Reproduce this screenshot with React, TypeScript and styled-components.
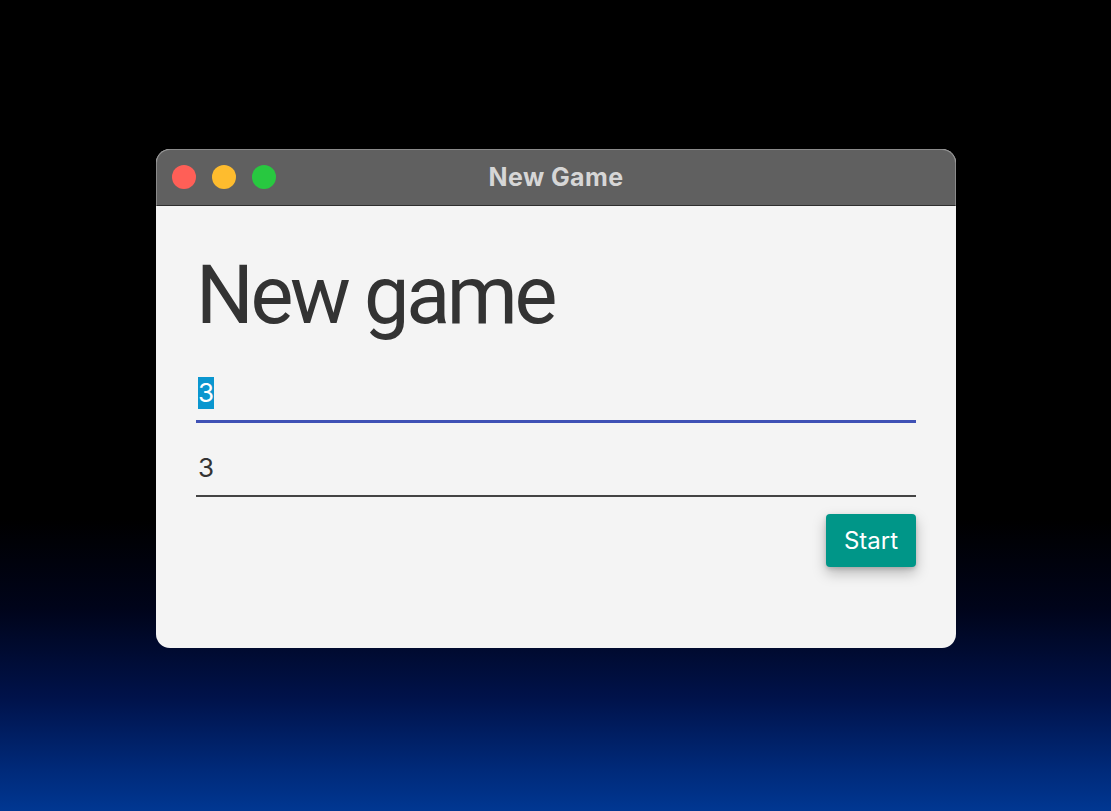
import styled, { createGlobalStyle } from "styled-components";

const GlobalStyle = createGlobalStyle`
  html, body {
    margin: 0;
    padding: 0;
  }

  body {
    min-height: 811px;
    background: linear-gradient(
      to bottom,
      #000 0%,
      #000 64%,
      #00041a 75%,
      #00124a 86%,
      #002a7a 95%,
      #003792 100%
    );
    font-family: Inter, "Noto Sans", sans-serif;
  }
`;

const Desktop = styled.div`
  display: flex;
  padding: 149px 0 0 156px;
`;

const Window = styled.div`
  width: 800px;
  height: 499px;
  display: flex;
  flex-direction: column;
  border-radius: 14px;
  overflow: hidden;
  box-sizing: border-box;
  background: #f4f4f4;
`;

const TitleBar = styled.div`
  position: relative;
  height: 57px;
  flex-shrink: 0;
  display: flex;
  align-items: center;
  justify-content: center;
  background: #606060;
  border: 1px solid #8a8a8a;
  border-bottom: 1px solid #2e2e2e;
  border-radius: 14px 14px 0 0;
  box-sizing: border-box;
`;

const Lights = styled.div`
  position: absolute;
  left: 15px;
  top: 15px;
  display: flex;
  gap: 16px;
`;

const Light = styled.span<{ $color: string }>`
  width: 24px;
  height: 24px;
  border-radius: 50%;
  background: ${(p) => p.$color};
`;

const WindowTitle = styled.div`
  font-size: 25px;
  font-weight: 700;
  color: #d6d6d6;
  letter-spacing: 0.4px;
  margin-top: -2px;
`;

const Content = styled.div`
  flex: 1;
  display: flex;
  flex-direction: column;
  padding: 50px 40px 0 40px;
`;

const Heading = styled.h1`
  margin: 0 0 29px 0;
  font-family: Roboto, Inter, sans-serif;
  font-size: 81px;
  line-height: 80px;
  font-weight: 400;
  color: #333;
  letter-spacing: -3.4px;
`;

const Field = styled.div<{ $focused?: boolean }>`
  height: 55px;
  display: flex;
  align-items: center;
  padding-left: 2px;
  border-bottom: 2px solid ${(p) => (p.$focused ? "#3f51b5" : "#444")};
  box-shadow: ${(p) => (p.$focused ? "0 1px 0 0 #3f51b5" : "none")};
  margin-bottom: 18px;
  font-size: 26px;
  color: #333;
`;

const Selected = styled.span`
  background: #0a96cf;
  color: #fff;
  line-height: 32px;
`;

const Actions = styled.div`
  display: flex;
  justify-content: flex-end;
  margin-top: -1px;
`;

const StartButton = styled.button`
  height: 53px;
  padding: 0 18px;
  border: none;
  border-radius: 4px;
  background: #009688;
  color: #fff;
  font-family: Inter, "Noto Sans", sans-serif;
  font-size: 24px;
  box-shadow: 0 6px 14px rgba(0, 0, 0, 0.25), 0 2px 4px rgba(0, 0, 0, 0.15);
  cursor: pointer;
`;

export default function App() {
  return (
    <>
      <GlobalStyle />
      <Desktop>
        <Window>
          <TitleBar>
            <Lights>
              <Light $color="#ff5f57" />
              <Light $color="#febc2e" />
              <Light $color="#28c840" />
            </Lights>
            <WindowTitle>New Game</WindowTitle>
          </TitleBar>
          <Content>
            <Heading>New game</Heading>
            <Field $focused>
              <Selected>3</Selected>
            </Field>
            <Field>3</Field>
            <Actions>
              <StartButton>Start</StartButton>
            </Actions>
          </Content>
        </Window>
      </Desktop>
    </>
  );
}
